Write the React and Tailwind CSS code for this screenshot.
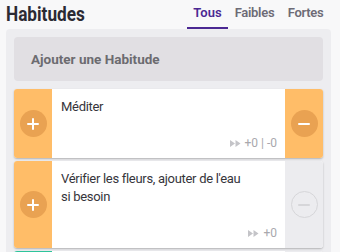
import React from 'react';

const FastForward = () => (
  <svg width="11" height="7" viewBox="0 0 11 7" className="mr-[4px]">
    <path d="M0 0 L5 3.5 L0 7 Z M5.5 0 L10.5 3.5 L5.5 7 Z" fill="#c4c4c8" />
  </svg>
);

const PlusIcon = () => (
  <svg width="12" height="12" viewBox="0 0 12 12">
    <path d="M6 1 V11 M1 6 H11" stroke="#fff" strokeWidth="2" strokeLinecap="round" />
  </svg>
);

const MinusIcon = ({ color }) => (
  <svg width="12" height="12" viewBox="0 0 12 12">
    <path d="M1 6 H11" stroke={color} strokeWidth="2" strokeLinecap="round" />
  </svg>
);

const HabitCard = ({ title, stats, leftColor, rightActive, height }) => (
  <div className={`flex bg-white rounded-[3px] overflow-hidden shadow-[0_1px_2px_rgba(0,0,0,0.25)] ${height}`}>
    <div className={`w-[38px] shrink-0 flex items-center justify-center ${leftColor}`}>
      {leftColor === 'bg-[#ffbd68]' && (
        <div className="w-[27px] h-[27px] rounded-full bg-[#e9a252] flex items-center justify-center">
          <PlusIcon />
        </div>
      )}
    </div>
    <div className="flex-1 flex flex-col justify-between pl-[9px] pr-[8px] pt-[9px] pb-[7px]">
      <p className="max-w-[183px] text-[13px] leading-[18px] tracking-[-0.3px] text-[#36353b]">{title}</p>
      {stats && (
        <div className="flex items-center justify-end text-[12px] leading-[16px] text-[#a9a8ad]">
          <FastForward />
          <span>{stats}</span>
        </div>
      )}
    </div>
    {rightActive !== undefined && (
      <div className={`w-[38px] shrink-0 flex items-center justify-center ${rightActive ? 'bg-[#ffbd68]' : 'bg-[#ececef]'}`}>
        {rightActive ? (
          <div className="w-[27px] h-[27px] rounded-full bg-[#e9a252] flex items-center justify-center">
            <MinusIcon color="#fff" />
          </div>
        ) : (
          <div className="w-[27px] h-[27px] rounded-full border border-[#d6d6d9] flex items-center justify-center">
            <MinusIcon color="#d6d6d9" />
          </div>
        )}
      </div>
    )}
  </div>
);

export default function App() {
  return (
    <div className="min-h-screen bg-[#f8f8f9] font-['Roboto',sans-serif]">
      <div className="flex items-end justify-between h-[29px] pl-[6px] pr-[10px]">
        <h1 className="inline-block origin-left scale-x-[0.82] text-[21px] leading-[24px] font-bold text-[#2b2a33] mb-[3px] whitespace-nowrap">Habitudes</h1>
        <div className="flex text-[13px] font-semibold">
          <div className="w-[41px] text-center pb-[5px] text-[#4b2893] border-b-2 border-[#4b2893]">Tous</div>
          <div className="w-[53px] text-center pb-[5px] text-[#6d6b76] border-b-2 border-transparent tracking-[-0.3px]">Faibles</div>
          <div className="w-[49px] text-center pb-[5px] text-[#6d6b76] border-b-2 border-transparent tracking-[-0.3px]">Fortes</div>
        </div>
      </div>
      <div className="ml-[6px] mr-[9px] bg-[#ededf0] rounded-[4px] p-[8px] flex flex-col">
        <div className="h-[44px] bg-[#e1dfe3] rounded-[4px] flex items-center pl-[17px] text-[13.5px] font-bold text-[#6c6b70]">
          Ajouter une Habitude
        </div>
        <div className="mt-[8px] flex flex-col gap-[3px]">
          <HabitCard title="Méditer" stats="+0 | -0" leftColor="bg-[#ffbd68]" rightActive={true} height="h-[69px]" />
          <HabitCard title="Vérifier les fleurs, ajouter de l'eau si besoin" stats="+0" leftColor="bg-[#ffbd68]" rightActive={false} height="h-[87px]" />
          <HabitCard title="" stats="" leftColor="bg-[#2ec49b]" rightActive={false} height="h-[69px]" />
        </div>
      </div>
    </div>
  );
}
